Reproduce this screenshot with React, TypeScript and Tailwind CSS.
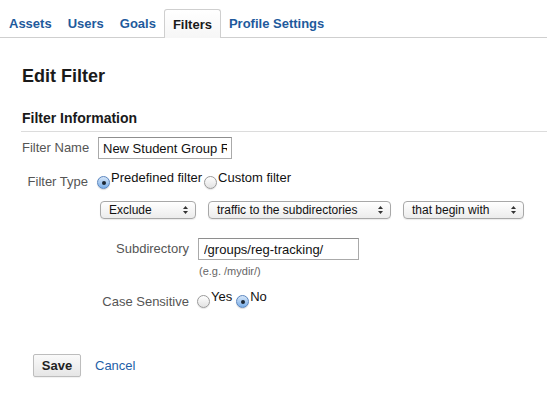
import React from "react";

const Radio = ({ checked }: { checked?: boolean }) =>
  checked ? (
    <span className="relative inline-block w-[13px] h-[13px] shrink-0 rounded-full border border-[#5b86bf] bg-gradient-to-b from-[#d6e6f8] to-[#79aee8] shadow-[0_1px_1px_rgba(0,0,0,0.15)]">
      <span className="absolute left-[3.5px] top-[3.5px] w-[4px] h-[4px] rounded-full bg-[#1c2733]" />
    </span>
  ) : (
    <span className="inline-block w-[13px] h-[13px] shrink-0 rounded-full border border-[#9a9a9a] bg-gradient-to-b from-[#ffffff] to-[#e2e2e2] shadow-[0_1px_1px_rgba(0,0,0,0.1)]" />
  );

const Select = ({ label, w }: { label: string; w: string }) => (
  <div
    className={`${w} h-[18px] flex items-center justify-between pl-[8px] pr-[6px] rounded-[4px] border border-[#a8a8a8] bg-gradient-to-b from-[#ffffff] to-[#ececec] shadow-[0_1px_1px_rgba(0,0,0,0.08)] text-[12px] leading-[16px] text-[#111]`}
  >
    <span className="whitespace-nowrap">{label}</span>
    <svg width="7" height="10" viewBox="0 0 7 10" className="shrink-0">
      <path d="M3.5 1 L6 4 L1 4 Z" fill="#333" />
      <path d="M3.5 9 L6 6 L1 6 Z" fill="#333" />
    </svg>
  </div>
);

export default function App() {
  return (
    <div className="w-[547px] h-[418px] bg-white font-['Liberation_Sans',Arial,sans-serif] overflow-hidden">
      {/* Tabs */}
      <div className="flex items-end h-[38px] border-b border-[#cfcfcf] pl-px">
        {["Assets", "Users", "Goals"].map((t) => (
          <div key={t} className="px-[8px] h-[28px] leading-[30px] text-[13px] font-bold text-[#1e5a9c]">
            {t}
          </div>
        ))}
        <div className="px-[8px] h-[29px] mb-[-1px] leading-[30px] text-[13px] font-bold text-[#1a1a1a] border border-b-0 border-[#cfcfcf] rounded-t-[3px] bg-gradient-to-b from-[#ffffff] to-[#f6f6f6]">
          Filters
        </div>
        <div className="px-[8px] h-[28px] leading-[30px] text-[13px] font-bold text-[#1e5a9c]">
          Profile Settings
        </div>
      </div>

      <div className="pl-[22px]">
        <h1 className="pt-[27px] text-[18px] leading-[22px] font-bold text-[#1a1a1a]">Edit Filter</h1>
        <h2 className="mt-[22px] text-[14px] leading-[18px] font-bold text-[#1a1a1a] border-b border-[#dcdcdc] pb-[4px] ml-[-1px] pl-px">
          Filter Information
        </h2>

        {/* Filter Name */}
        <div className="mt-[5px] flex items-center">
          <div className="w-[67px] text-right text-[13px] leading-[22px] text-[#555] whitespace-nowrap">Filter Name</div>
          <input
            readOnly
            value="New Student Group Reg Tracking"
            className="ml-[9px] w-[134px] h-[22px] px-[4px] border border-[#aaaaaa] border-t-[#8e8e8e] text-[13px] text-[#111] outline-none bg-white"
          />
        </div>

        {/* Filter Type */}
        <div className="mt-[11px] flex items-start">
          <div className="w-[66px] mt-[4px] text-right text-[13px] leading-[16px] text-[#555] whitespace-nowrap">Filter Type</div>
          <div className="ml-[9px] flex items-start text-[13px] leading-[16px] text-[#111]">
            <span className="mt-[6px]"><Radio checked /></span>
            <span className="ml-[1px]">Predefined filter</span>
            <span className="ml-[2px] mt-[6px]"><Radio /></span>
            <span className="ml-[1px]">Custom filter</span>
          </div>
        </div>

        {/* Selects */}
        <div className="mt-[8px] ml-[78px] flex items-center gap-[12px]">
          <Select label="Exclude" w="w-[96px]" />
          <Select label="traffic to the subdirectories" w="w-[183px]" />
          <Select label="that begin with" w="w-[121px]" />
        </div>

        {/* Subdirectory */}
        <div className="mt-[19px] ml-[76px] flex items-start">
          <div className="w-[91px] text-right text-[13px] leading-[22px] text-[#555] whitespace-nowrap">Subdirectory</div>
          <div className="ml-[9px] flex flex-col">
            <input
              readOnly
              value="/groups/reg-tracking/"
              className="w-[161px] h-[22px] px-[5px] border border-[#aaaaaa] border-t-[#8e8e8e] text-[13px] text-[#111] outline-none bg-white"
            />
            <div className="mt-[4px] ml-[1px] text-[11px] leading-[14px] text-[#666]">(e.g. /mydir/)</div>
          </div>
        </div>

        {/* Case Sensitive */}
        <div className="mt-[11px] ml-[76px] flex items-start">
          <div className="w-[91px] mt-[5px] text-right text-[13px] leading-[16px] text-[#555] whitespace-nowrap">Case Sensitive</div>
          <div className="ml-[8px] flex items-start text-[13px] leading-[16px] text-[#111]">
            <span className="mt-[6px]"><Radio /></span>
            <span className="ml-[1px]">Yes</span>
            <span className="ml-[4px] mt-[6px]"><Radio checked /></span>
            <span className="ml-[1px]">No</span>
          </div>
        </div>

        {/* Buttons */}
        <div className="mt-[42px] ml-[11px] flex items-center">
          <button className="w-[48px] h-[23px] rounded-[2px] border border-[#bdbdbd] bg-gradient-to-b from-[#fafafa] to-[#e6e6e6] text-[13px] font-bold text-[#222] shadow-[0_1px_1px_rgba(0,0,0,0.06)]">
            Save
          </button>
          <span className="ml-[14px] text-[13px] text-[#1f5fa8]">Cancel</span>
        </div>
      </div>
    </div>
  );
}
